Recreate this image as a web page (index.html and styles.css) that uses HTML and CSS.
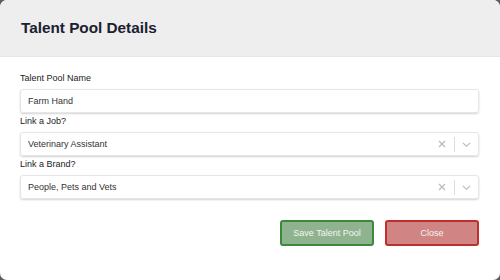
FILE: index.html
```html
<!DOCTYPE html>
<html lang="en">
<head>
    <meta charset="UTF-8">
    <title>Talent Pool Details</title>
    <link rel="stylesheet" href="styles.css">
</head>
<body>
<div class="modal">
    <div class="modal-header">
        <h2>Talent Pool Details</h2>
    </div>
    <div class="modal-body">
        <label class="field-label">Talent Pool Name</label>
        <div class="input">Farm Hand</div>

        <label class="field-label">Link a Job?</label>
        <div class="select">
            <span class="select-value">Veterinary Assistant</span>
            <span class="select-clear">
                <svg width="8" height="8" viewBox="0 0 8 8"><path d="M1 1l6 6M7 1l-6 6" stroke="#bbb" stroke-width="1.3"/></svg>
            </span>
            <span class="select-sep"></span>
            <span class="select-arrow">
                <svg width="9" height="5" viewBox="0 0 9 5"><path d="M0.8 0.8l3.7 3.4 3.7-3.4" fill="none" stroke="#bbb" stroke-width="1.1"/></svg>
            </span>
        </div>

        <label class="field-label">Link a Brand?</label>
        <div class="select">
            <span class="select-value">People, Pets and Vets</span>
            <span class="select-clear">
                <svg width="8" height="8" viewBox="0 0 8 8"><path d="M1 1l6 6M7 1l-6 6" stroke="#bbb" stroke-width="1.3"/></svg>
            </span>
            <span class="select-sep"></span>
            <span class="select-arrow">
                <svg width="9" height="5" viewBox="0 0 9 5"><path d="M0.8 0.8l3.7 3.4 3.7-3.4" fill="none" stroke="#bbb" stroke-width="1.1"/></svg>
            </span>
        </div>

        <div class="actions">
            <button class="btn btn-save">Save Talent Pool</button>
            <button class="btn btn-close">Close</button>
        </div>
    </div>
</div>
</body>
</html>
```

FILE: styles.css
```css
html, body {
    margin: 0;
    height: 100%;
    background: #5c5c5c;
}

body {
    font-family: "Liberation Sans", Arial, sans-serif;
    color: #222;
}

.modal {
    height: 280px;
    background: #fff;
    border-radius: 7px;
    overflow: hidden;
}

.modal-header {
    height: 57px;
    background: #eeeeee;
    border-bottom: 1px solid #e6e6e6;
    box-sizing: border-box;
    display: flex;
    align-items: center;
    padding: 0 20px;
}

.modal-header h2 {
    margin: 0 0 1px 1px;
    font-size: 15.3px;
    font-weight: bold;
    color: #1c2030;
}

.modal-body {
    padding: 15px 21px 0 20px;
    display: flex;
    flex-direction: column;
}

.field-label {
    font-size: 9px;
    line-height: 13px;
    margin-bottom: 4px;
}

.input,
.select {
    height: 24px;
    box-sizing: border-box;
    border: 1px solid #e6e6e6;
    border-radius: 3px;
    box-shadow: 0 1px 2px rgba(0, 0, 0, 0.18);
    font-size: 9px;
    color: #333;
    margin-bottom: 2px;
}

.input {
    padding: 0 7px;
    line-height: 22px;
}

.select {
    display: flex;
    align-items: center;
    padding-left: 7px;
}

.select-value {
    flex: 1;
}

.select-clear {
    width: 14px;
    display: flex;
    justify-content: center;
}

.select-sep {
    width: 1px;
    height: 15px;
    background: #ddd;
    margin: 0 3px 0 5px;
}

.select-arrow {
    width: 16px;
    display: flex;
    justify-content: center;
    margin-right: 4px;
}

.actions {
    display: flex;
    justify-content: flex-end;
    gap: 11px;
    margin-top: 19px;
}

.btn {
    width: 94px;
    height: 26px;
    border-radius: 3px;
    font-family: "Liberation Sans", Arial, sans-serif;
    font-size: 9px;
    color: #f4f4f4;
    padding: 0;
}

.btn-save {
    background: #8fb38f;
    border: 2px solid #3b8a3b;
}

.btn-close {
    background: #d18484;
    border: 2px solid #c12e2e;
}
```
